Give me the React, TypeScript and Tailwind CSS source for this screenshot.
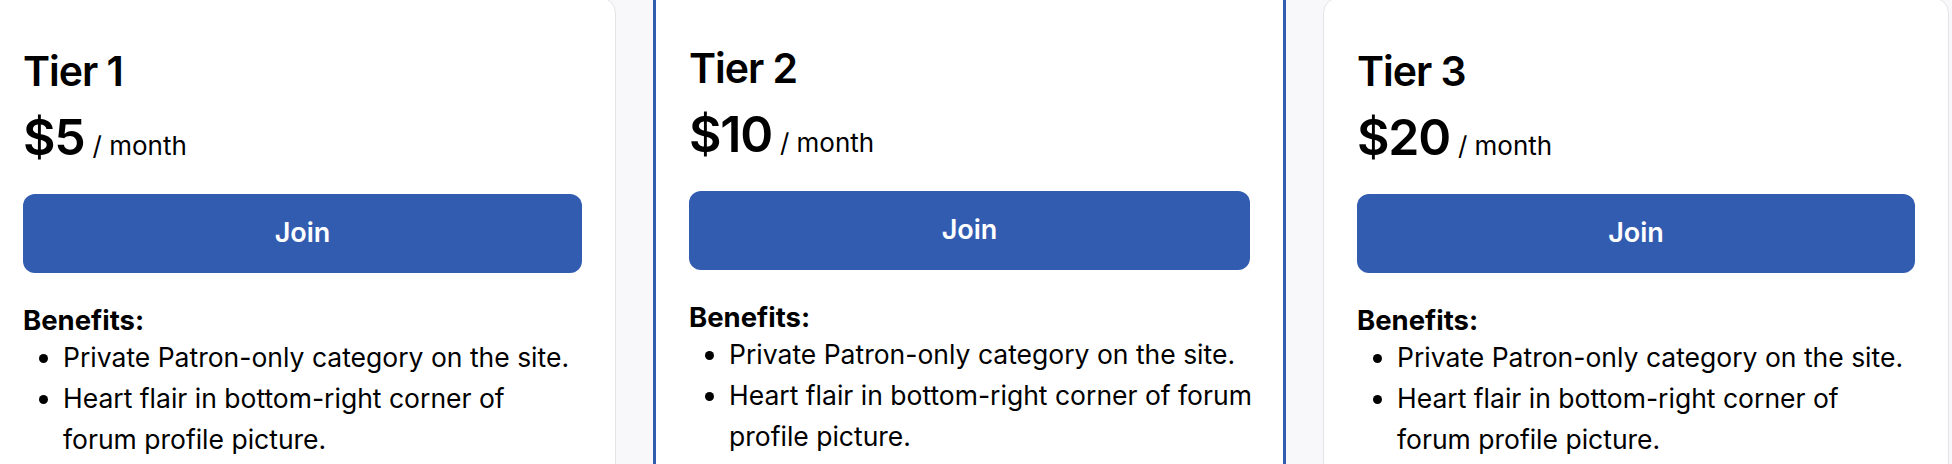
import React from 'react';

interface Tier {
  name: string;
  price: string;
  benefits: string[];
  featured?: boolean;
}

const benefits = [
  'Private Patron-only category on the site.',
  'Heart flair in bottom-right corner of forum profile picture.',
  'Patron Pink flair on your forum username.',
];

const tiers: Tier[] = [
  { name: 'Tier 1', price: '$5', benefits },
  { name: 'Tier 2', price: '$10', benefits, featured: true },
  { name: 'Tier 3', price: '$20', benefits },
];

const TierCard: React.FC<{ tier: Tier; width: string }> = ({ tier, width }) => {
  return (
    <div
      className={`shrink-0 bg-white rounded-[16px] px-[33px] pb-12 ${width} ${
        tier.featured
          ? 'border-[3px] border-[#325cb0] -mt-[20px] pt-[66px]'
          : 'border border-[#e4e4e7] pt-[51px]'
      }`}
    >
      {/* Heading */}
      <h3 className="text-[41px] leading-[44px] font-semibold tracking-tight text-black">{tier.name}</h3>

      {/* Price */}
      <div className="mt-[16px] flex items-baseline gap-[8px]">
        <span className="text-[50px] leading-[56px] font-semibold tracking-tight text-black">{tier.price}</span>
        <span className="text-[26px] text-black">/ month</span>
      </div>

      <button className="mt-[29px] w-full h-[79px] rounded-[12px] bg-[#325cb0] text-white text-[27px] font-semibold">
        Join
      </button>

      {/* Benefits */}
      <div className="mt-[31px] text-[27.5px] leading-[32px] font-bold text-black">Benefits:</div>
      <ul
        className={`mt-[1px] list-disc pl-[40px] text-[26.5px] leading-[41px] text-black ${
          tier.featured ? '-mr-[12px]' : 'pr-[8px]'
        }`}
      >
        {tier.benefits.map((b) => (
          <li key={b}>{b}</li>
        ))}
      </ul>
    </div>
  );
};

export default function App() {
  return (
    <div className="h-[464px] overflow-hidden bg-[#f8f8fa] font-['Inter',sans-serif]">
      <div className="flex items-start gap-[37px] -ml-[11px] -mt-[3px]">
        <TierCard tier={tiers[0]} width="w-[627px]" />
        <TierCard tier={tiers[1]} width="w-[633px]" />
        <TierCard tier={tiers[2]} width="w-[626px]" />
      </div>
    </div>
  );
}
